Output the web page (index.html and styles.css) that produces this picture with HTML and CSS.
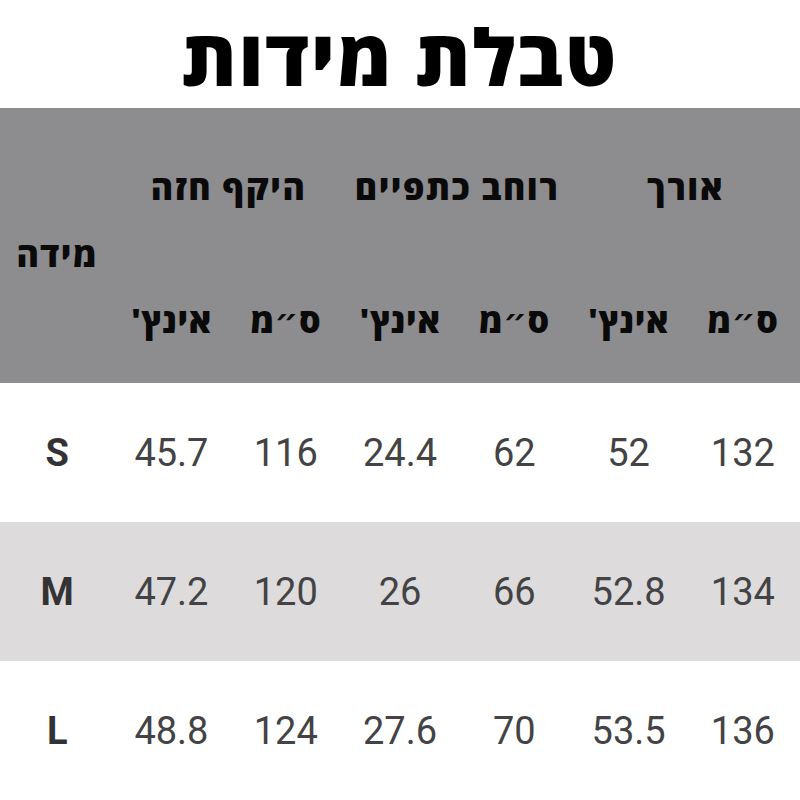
FILE: index.html
```html
<!DOCTYPE html>
<html lang="he" dir="rtl">
<head>
<meta charset="utf-8">
<title>טבלת מידות</title>
<link rel="stylesheet" href="styles.css">
</head>
<body>
<h1 class="title">טבלת מידות</h1>
<div class="table">
  <div class="head">
    <div class="group">אורך</div>
    <div class="group">רוחב כתפיים</div>
    <div class="group">היקף חזה</div>
    <div class="size-label">מידה</div>
    <div class="unit">ס״מ</div>
    <div class="unit">אינץ'</div>
    <div class="unit">ס״מ</div>
    <div class="unit">אינץ'</div>
    <div class="unit">ס״מ</div>
    <div class="unit">אינץ'</div>
  </div>
  <div class="row">
    <div>132</div><div>52</div><div>62</div><div>24.4</div><div>116</div><div>45.7</div><div class="size">S</div>
  </div>
  <div class="row alt">
    <div>134</div><div>52.8</div><div>66</div><div>26</div><div>120</div><div>47.2</div><div class="size">M</div>
  </div>
  <div class="row">
    <div>136</div><div>53.5</div><div>70</div><div>27.6</div><div>124</div><div>48.8</div><div class="size">L</div>
  </div>
</div>
</body>
</html>
```
FILE: styles.css
```css
* { box-sizing: border-box; }
html, body { margin: 0; padding: 0; background: #ffffff; }
body { width: 800px; height: 800px; overflow: hidden; }

.title {
  margin: 0;
  height: 108px;
  display: flex;
  align-items: center;
  justify-content: center;
  font-family: "Open Sans", "DejaVu Sans", sans-serif;
  font-weight: 900;
  font-size: 78px;
  letter-spacing: 2px;
  color: #000;
  padding-top: 4px;
}

.head {
  background: #8d8c8e;
  height: 275px;
  display: grid;
  grid-template-columns: repeat(7, 1fr);
  grid-template-rows: 48px 48px;
  row-gap: 85px;
  padding: 55px 0 39px;
  font-family: "Open Sans", "DejaVu Sans", sans-serif;
  font-weight: 800;
  font-size: 34px;
  letter-spacing: 1.5px;
  color: #0a0a0a;
  text-align: center;
  align-items: center;
}

.group { grid-column: span 2; grid-row: 1; }
.size-label { grid-column: 7; grid-row: 1 / 3; align-self: center; }
.unit { grid-row: 2; letter-spacing: 0.5px; }

.row {
  height: 139px;
  display: grid;
  grid-template-columns: repeat(7, 1fr);
  align-items: center;
  text-align: center;
  font-family: Roboto, "Liberation Sans", sans-serif;
  font-size: 38px;
  color: #434345;
}
.row.alt { background: #dddbdc; }
.size { font-weight: 700; color: #333335; }
```
